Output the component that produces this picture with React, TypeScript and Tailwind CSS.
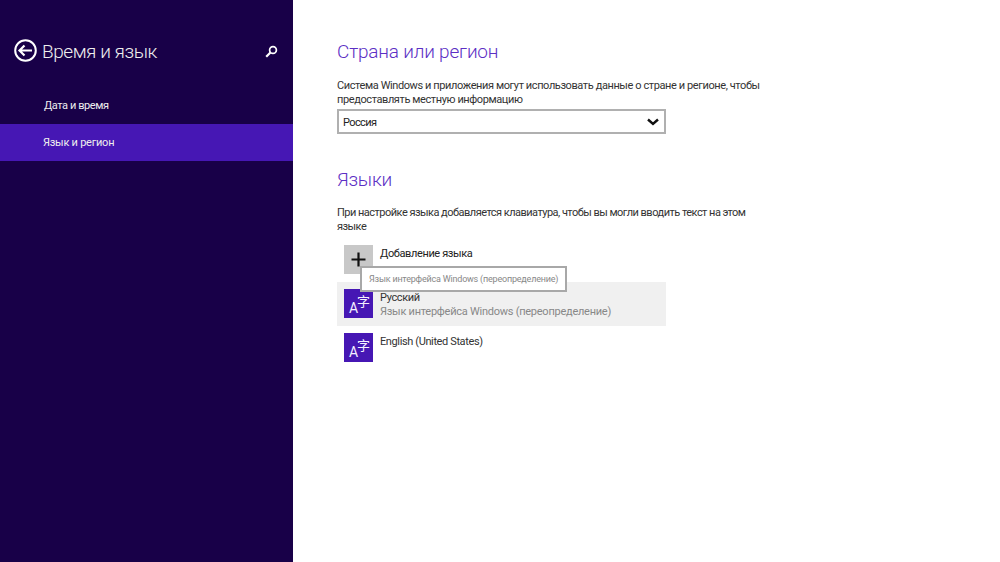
const font = { fontFamily: 'Roboto, "Noto Sans", "Noto Sans CJK SC", sans-serif' };

function LangIcon() {
  return (
    <div className="relative w-[29px] h-[29px] shrink-0 bg-[#4617b4] text-[#f4f0ff] leading-none tracking-normal">
      <span className="absolute left-[5px] top-[11px] text-[14px] leading-[16px]">A</span>
      <span className="absolute left-[13px] top-[4px] text-[13px] leading-[16px]" style={{ fontFamily: '"Noto Sans CJK SC", sans-serif' }}>字</span>
    </div>
  );
}

function LangRow({ active, title, sub }: { active?: boolean; title: string; sub?: string }) {
  return (
    <div className={active ? "flex h-[44px] px-[7px] pt-[7px] gap-[7px] bg-[#f0f0f0]" : "flex h-[44px] px-[7px] pt-[7px] gap-[7px]"}>
      <LangIcon />
      <div className="leading-[14px] mt-[2px]">
        <div className="tracking-[-0.38px]">{title}</div>
        {sub && <div className="text-[#888]">{sub}</div>}
      </div>
    </div>
  );
}

export default function App() {
  return (
    <div className="flex w-[1000px] h-[562px] overflow-hidden bg-white text-[11px] tracking-[-0.25px] text-[#333]" style={font}>
      <aside className="w-[293px] shrink-0 bg-[#180048] text-white">
        <div className="h-[87px] flex items-start pt-[39px] pl-[14px] pr-[15px]">
          <svg width="23" height="23" viewBox="0 0 23 23" fill="none" stroke="#fff" className="shrink-0">
            <circle cx="11.5" cy="11.5" r="10.3" strokeWidth="2" />
            <path d="M18 11.5H6M10.5 6.5l-5 5 5 5" strokeWidth="2.2" />
          </svg>
          <h1 className="ml-[5px] text-[19px] tracking-[-0.45px] leading-[26px] font-light text-[#eee]">Время и язык</h1>
          <svg width="13" height="13" viewBox="0 0 13 13" fill="none" stroke="#fff" className="ml-auto mt-[6px]">
            <circle cx="8" cy="5" r="3.4" strokeWidth="1.7" />
            <path d="M5.5 7.5L1.2 11.8" strokeWidth="2.2" />
          </svg>
        </div>
        <nav>
          <div className="h-[37px] pl-[44px] leading-[37px] tracking-[-0.42px] text-[#eee]">Дата и время</div>
          <div className="h-[37px] pl-[43px] leading-[37px] bg-[#4617b4] text-[#eee]">Язык и регион</div>
        </nav>
      </aside>
      <main className="flex-1 pl-[44px] pt-[39px]">
        <h2 className="text-[19px] tracking-[-0.2px] leading-[26px] font-light text-[#5c2fc4]">Страна или регион</h2>
        <p className="mt-[14px] w-[440px] leading-[14px] tracking-[-0.4px]">Система Windows и приложения могут использовать данные о стране и регионе, чтобы предоставлять местную информацию</p>
        <div className="mt-[2px] w-[329px] h-[25px] border-2 border-[#b0b0b0] flex items-center justify-between pl-[4px] pr-[5px] text-[#222]">
          <span className="mt-[3px] tracking-[-0.6px]">Россия</span>
          <svg width="12" height="8" viewBox="0 0 12 8" fill="none" stroke="#111" strokeWidth="2.4"><path d="M1 1.5l5 4.5 5-4.5" /></svg>
        </div>
        <h2 className="mt-[33px] text-[19px] tracking-[-0.2px] leading-[26px] font-light text-[#5c2fc4]">Языки</h2>
        <p className="mt-[13px] w-[425px] leading-[14px] tracking-[-0.52px]">При настройке языка добавляется клавиатура, чтобы вы могли вводить текст на этом языке</p>
        <div className="relative mt-[4px] w-[329px]">
          <div className="flex h-[44px] px-[7px] pt-[7px] gap-[7px]">
            <div className="w-[29px] h-[29px] bg-[#c8c8c8] flex items-center justify-center">
              <svg width="15" height="15" viewBox="0 0 15 15" fill="none" stroke="#111" strokeWidth="2.2"><path d="M7.5 0.5v14M0.5 7.5h14" /></svg>
            </div>
            <div className="leading-[14px] mt-[2px] tracking-[-0.38px] text-[#222]">Добавление языка</div>
          </div>
          <LangRow active title="Русский" sub="Язык интерфейса Windows (переопределение)" />
          <LangRow title="English (United States)" />
          <div className="absolute left-[23px] top-[28px] w-[207px] h-[26px] bg-white border-2 border-[#a8a8a8] text-[9px] tracking-[-0.2px] leading-[23px] pl-[7px] text-[#888] whitespace-nowrap">Язык интерфейса Windows (переопределение)</div>
        </div>
      </main>
    </div>
  );
}
